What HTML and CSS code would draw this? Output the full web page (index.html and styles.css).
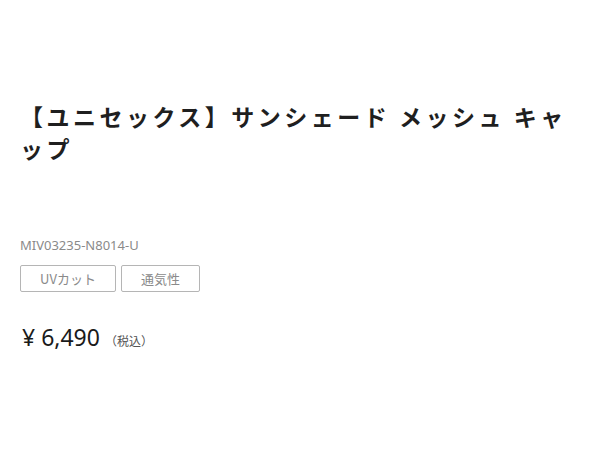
FILE: index.html
```html
<!DOCTYPE html>
<html lang="ja">
<head>
<meta charset="utf-8">
<link rel="stylesheet" href="styles.css">
</head>
<body>
<main class="product">
  <h1 class="title">【ユニセックス】サンシェード メッシュ キャップ</h1>
  <p class="code">MIV03235-N8014-U</p>
  <ul class="tags">
    <li class="tag">UVカット</li>
    <li class="tag">通気性</li>
  </ul>
  <p class="price"><span class="amount">¥ 6,490</span><span class="tax">（税込）</span></p>
</main>
</body>
</html>
```

FILE: styles.css
```css
html, body {
  margin: 0;
  padding: 0;
  background: #fff;
}
body {
  font-family: "Noto Sans CJK JP", "Noto Sans", sans-serif;
  color: #222;
}
.product {
  padding: 100px 20px 0 20px;
}
.title {
  margin: 0;
  font-size: 23px;
  font-weight: 700;
  line-height: 32px;
  letter-spacing: 3.5px;
  color: #1f1f1f;
}
.code {
  margin: 72px 0 0 0;
  font-family: "Noto Sans", "Noto Sans CJK JP", sans-serif;
  font-size: 13px;
  line-height: 18px;
  color: #8a8a8a;
}
.tags {
  list-style: none;
  margin: 11px 0 0 0;
  padding: 0;
  display: flex;
  gap: 5px;
}
.tag {
  box-sizing: border-box;
  height: 27px;
  border: 1px solid #b5b5b5;
  border-radius: 2px;
  font-size: 13px;
  line-height: 25px;
  color: #8a8a8a;
  text-align: center;
  width: 96px;
}
.tag + .tag {
  width: 79px;
}
.price {
  margin: 29px 0 0 2px;
  display: flex;
  align-items: baseline;
}
.amount {
  font-family: "Noto Sans", "Noto Sans CJK JP", sans-serif;
  font-size: 23px;
  color: #1a1a1a;
}
.tax {
  margin-left: 5px;
  font-size: 12px;
  color: #555;
}
```
